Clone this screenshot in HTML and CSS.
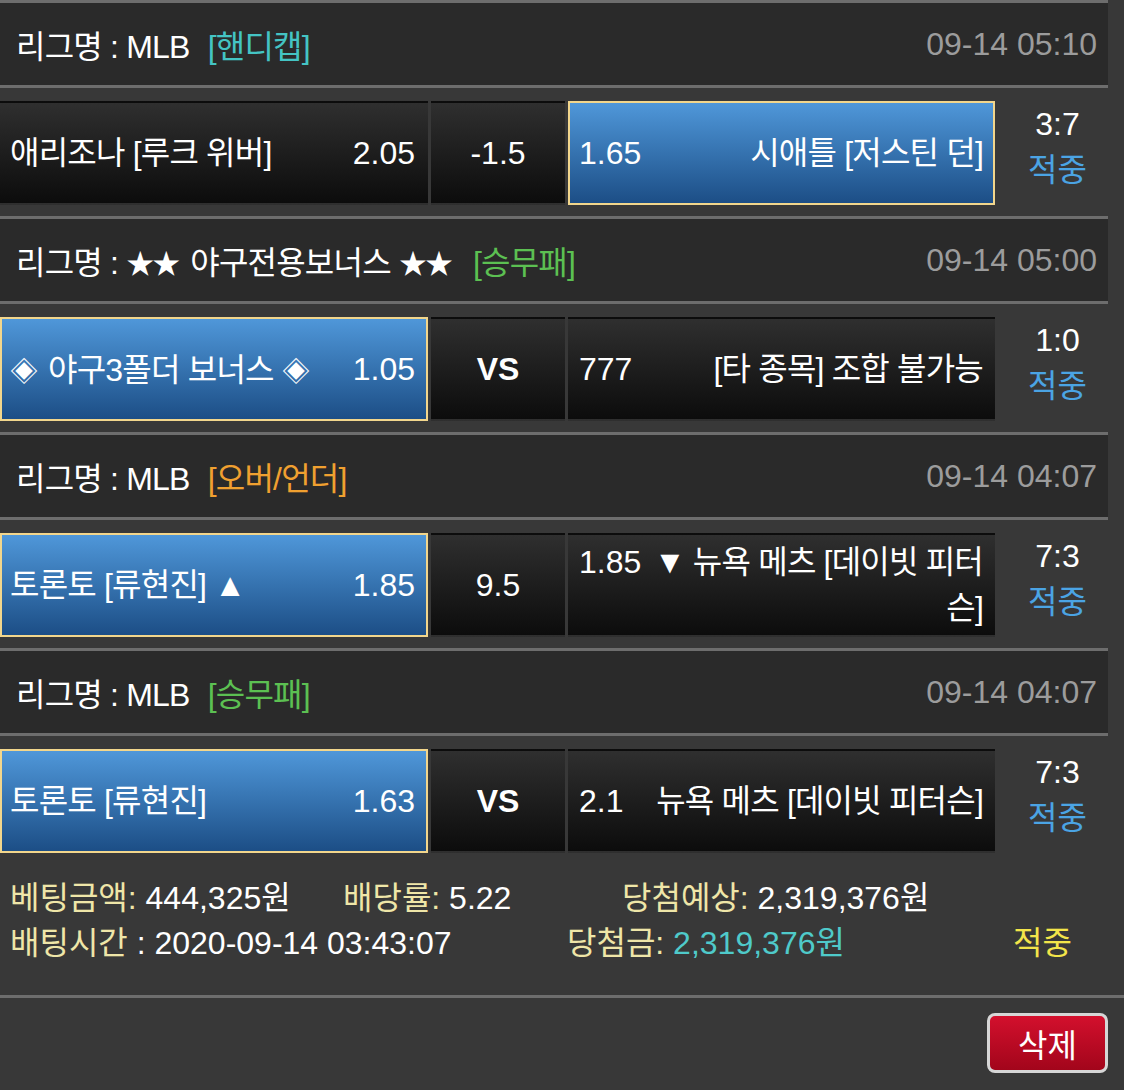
FILE: index.html
```html
<!DOCTYPE html>
<html lang="ko">
<head>
<meta charset="utf-8">
<title>베팅내역</title>
<link rel="stylesheet" href="styles.css">
</head>
<body>
<div class="games">
  <section class="game">
    <div class="league">
      <div class="league-name">리그명 : MLB <span class="type teal">[핸디캡]</span></div>
      <div class="date">09-14 05:10</div>
    </div>
    <div class="bet-row">
      <div class="cell home"><span class="team">애리조나 [루크 위버]</span><span class="odds">2.05</span></div>
      <div class="cell mid">-1.5</div>
      <div class="cell away selected"><div class="away-inner"><span class="odds-l">1.65</span>시애틀 [저스틴 던]</div></div>
      <div class="score"><div>3:7</div><div class="hit">적중</div></div>
    </div>
  </section>
  <section class="game">
    <div class="league">
      <div class="league-name">리그명 : <span class="sym">★★</span> 야구전용보너스 <span class="sym">★★</span> <span class="type green">[승무패]</span></div>
      <div class="date">09-14 05:00</div>
    </div>
    <div class="bet-row">
      <div class="cell home selected"><span class="team"><span class="sym">◈</span> 야구3폴더 보너스 <span class="sym">◈</span></span><span class="odds">1.05</span></div>
      <div class="cell mid vs">VS</div>
      <div class="cell away"><div class="away-inner"><span class="odds-l">777</span>[타 종목] 조합 불가능</div></div>
      <div class="score"><div>1:0</div><div class="hit">적중</div></div>
    </div>
  </section>
  <section class="game">
    <div class="league">
      <div class="league-name">리그명 : MLB <span class="type orange">[오버/언더]</span></div>
      <div class="date">09-14 04:07</div>
    </div>
    <div class="bet-row">
      <div class="cell home selected"><span class="team">토론토 [류현진] ▲</span><span class="odds">1.85</span></div>
      <div class="cell mid">9.5</div>
      <div class="cell away"><div class="away-inner"><span class="odds-l gap">1.85</span>▼ 뉴욕 메츠 [데이빗 피터슨]</div></div>
      <div class="score"><div>7:3</div><div class="hit">적중</div></div>
    </div>
  </section>
  <section class="game">
    <div class="league">
      <div class="league-name">리그명 : MLB <span class="type green">[승무패]</span></div>
      <div class="date">09-14 04:07</div>
    </div>
    <div class="bet-row">
      <div class="cell home selected"><span class="team">토론토 [류현진]</span><span class="odds">1.63</span></div>
      <div class="cell mid vs">VS</div>
      <div class="cell away"><div class="away-inner"><span class="odds-l">2.1</span>뉴욕 메츠 [데이빗 피터슨]</div></div>
      <div class="score"><div>7:3</div><div class="hit">적중</div></div>
    </div>
  </section>
</div>
<div class="info">
  <div class="info-line l1">
    <div><span class="label">베팅금액:</span> 444,325원</div>
    <div><span class="label">배당률:</span> 5.22</div>
    <div><span class="label">당첨예상:</span> 2,319,376원</div>
  </div>
  <div class="info-line l2">
    <div><span class="label">배팅시간</span> : 2020-09-14 03:43:07</div>
    <div><span class="label">당첨금:</span> <span class="win">2,319,376원</span></div>
    <div class="result">적중</div>
  </div>
</div>
<div class="actions">
  <button class="btn-delete" type="button">삭제</button>
</div>
</body>
</html>
```
FILE: styles.css
```css
* {
  box-sizing: border-box;
}

html, body {
  margin: 0;
  padding: 0;
}

body {
  width: 1124px;
  height: 1090px;
  overflow: hidden;
  background: #383838;
  color: #ffffff;
  font-family: "Liberation Sans", "Noto Sans CJK KR", sans-serif;
  font-size: 32px;
  font-feature-settings: "palt";
}

.games {
  width: 1108px;
}

.league {
  display: flex;
  justify-content: space-between;
  align-items: center;
  height: 88px;
  padding: 0 11px 0 16px;
  background: #2a2a2a;
  border-top: 3px solid #6d6d6d;
  border-bottom: 3px solid #6d6d6d;
  white-space: nowrap;
}

.league-name,
.team,
.away-inner {
  letter-spacing: -0.8px;
}

.sym {
  font-family: "Noto Sans CJK KR", sans-serif;
  font-feature-settings: normal;
  font-size: 28px;
  letter-spacing: -2px;
  margin-right: 4px;
}

.type {
  margin-left: 10px;
}

.teal { color: #44c4c4; }
.green { color: #5cc052; }
.orange { color: #f0a030; }

.date {
  color: #9c9c9c;
}

.bet-row {
  display: flex;
  align-items: flex-start;
  height: 128px;
  padding: 13px 0 11px;
}

.cell {
  display: flex;
  align-items: center;
  height: 104px;
  line-height: 46px;
  border: 2px solid transparent;
  background: linear-gradient(#2f2f2f, #0c0c0c);
}

.cell.home {
  width: 428px;
  justify-content: space-between;
  padding: 0 11px 0 8px;
  white-space: nowrap;
}

.cell.mid {
  width: 134px;
  margin-left: 3px;
  justify-content: center;
}

.cell.vs {
  font-weight: bold;
}

.cell.away {
  width: 427px;
  margin-left: 3px;
  padding: 0 10px 0 9px;
}

.away-inner {
  width: 100%;
  text-align: right;
}

.odds-l {
  float: left;
  letter-spacing: 0;
}

.odds-l.gap {
  margin-right: 10px;
}

.cell.selected {
  background: linear-gradient(#4f97d9, #1c4e86);
  border-color: #f2d68c;
}

.score {
  width: 113px;
  padding-left: 12px;
  text-align: center;
  line-height: 46px;
}

.hit {
  color: #4ba4e4;
}

.info {
  width: 1124px;
  padding: 12px 0 29px 10px;
  line-height: 45px;
  border-bottom: 3px solid #6d6d6d;
  white-space: nowrap;
}

.info-line {
  display: grid;
}

.l1 {
  grid-template-columns: 333px 279px auto;
}

.l2 {
  grid-template-columns: 557px 446px auto;
}

.label {
  color: #efe6a8;
}

.win {
  color: #4fcaca;
}

.result {
  color: #f3e54a;
}

.actions {
  display: flex;
  justify-content: flex-end;
  padding: 15px 16px 0 0;
}

.btn-delete {
  width: 121px;
  height: 60px;
  border: 3px solid #d6d6d6;
  border-radius: 8px;
  background: linear-gradient(#d3102d, #a2051b);
  color: #ffffff;
  font-family: "Liberation Sans", "Noto Sans CJK KR", sans-serif;
  font-size: 32px;
  padding: 0;
}
```
